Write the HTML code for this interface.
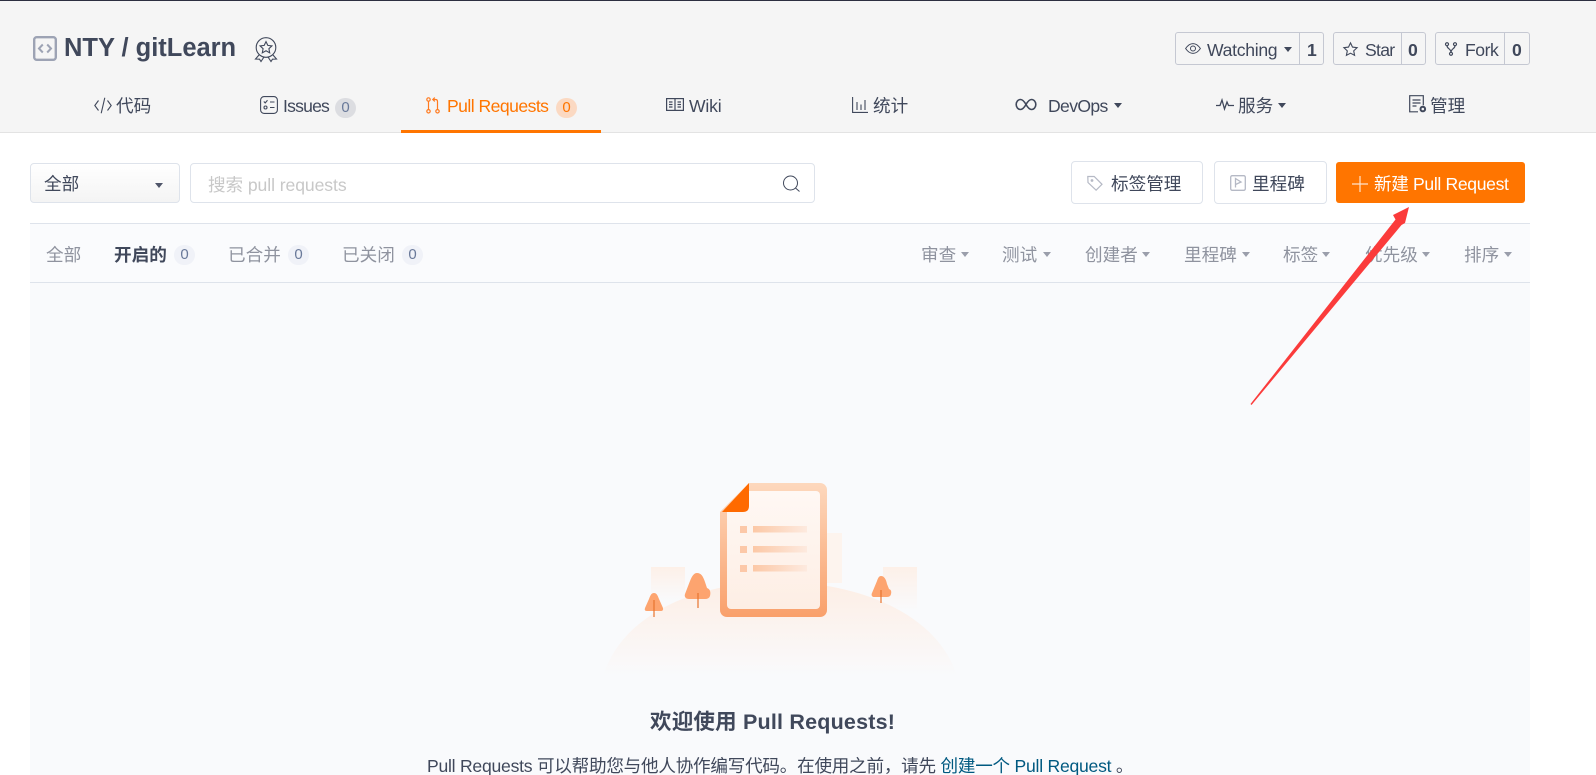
<!DOCTYPE html>
<html lang="zh">
<head>
<meta charset="utf-8">
<title>NTY / gitLearn - Pull Requests</title>
<style>
html,body{margin:0;padding:0;width:1596px;height:775px;overflow:hidden;background:#fff}
body{position:relative;font-family:"Liberation Sans","Noto Sans CJK SC",sans-serif;color:#40485b}
.box{position:absolute;box-sizing:border-box}
.t{position:absolute;white-space:nowrap;line-height:24px;font-size:17.6px;color:#40485b}
.n{letter-spacing:-.45px}
svg{position:absolute;overflow:visible}
.c{position:absolute;width:0;height:0;border-left:4.5px solid transparent;border-right:4.5px solid transparent;border-top:5px solid #40485b}
.g{border-color:#9a9eab;border-top-color:#9a9eab;border-left-color:transparent;border-right-color:transparent}
.bd{position:absolute;border-radius:11px;text-align:center;font-size:15px;line-height:20px;height:20px;width:21px;background:#f0f2f8;color:#6a7a9a}
.f{color:#8f939f}
</style>
</head>
<body>
<!-- header -->
<div class="box" style="left:0;top:0;width:1596px;height:133px;background:#f5f5f5;border-bottom:1px solid #e3e3e3"></div>
<div class="box" style="left:0;top:0;width:1596px;height:1px;background:#2d2f40"></div>

<svg style="left:33px;top:36px" width="24" height="25" viewBox="0 0 24 25" fill="none" stroke="#9da3b4"><rect x="1.2" y="1.2" width="21.6" height="22.6" rx="2.5" stroke-width="2.4"/><path d="M9.8 8.5L6 12.5l3.8 4M14.2 8.5L18 12.5l-3.8 4" stroke-width="2"/></svg>
<span class="t" style="left:64px;top:36px;font-size:25.5px;font-weight:700;line-height:24px;letter-spacing:-.02px">NTY / gitLearn</span>
<svg style="left:254px;top:37px" width="24" height="25" viewBox="0 0 24 25" fill="none" stroke="#40485b" stroke-width="1.1"><circle cx="12" cy="10.5" r="9.8"/><path d="M12 4.6l1.8 3.8 4.1.5-3 2.8.8 4.1-3.7-2-3.7 2 .8-4.1-3-2.8 4.1-.5z"/><path d="M5 18l-3.500 4 4 .2 1.500 2.300 3-4.500M19 18l3.500 4-4 .2-1.500 2.300-3-4.500"/></svg>

<!-- repo actions -->
<div class="box" style="left:1175px;top:32px;width:149px;height:33px;border:1px solid #c5c8d2;border-radius:3px"></div>
<div class="box" style="left:1299px;top:32px;width:1px;height:33px;background:#c5c8d2"></div>
<svg style="left:1185px;top:43px" width="16" height="11" viewBox="0 0 16 11" fill="none" stroke="#40485b" stroke-width="1"><path d="M.6 5.500C3 2 5.500.6 8 .6s5 1.400 7.400 4.900C13 9 10.500 10.400 8 10.400S3 9 .6 5.500z"/><circle cx="8" cy="5.500" r="2.500"/></svg>
<span class="t n" style="left:1207px;top:38px;letter-spacing:-.3px">Watching</span>
<div class="c" style="left:1284px;top:47px"></div>
<span class="t" style="left:1307px;top:38px;font-weight:700">1</span>

<div class="box" style="left:1333px;top:32px;width:93px;height:33px;border:1px solid #c5c8d2;border-radius:3px"></div>
<div class="box" style="left:1401px;top:32px;width:1px;height:33px;background:#c5c8d2"></div>
<svg style="left:1343px;top:42px" width="15" height="14" viewBox="0 0 15 14" fill="none" stroke="#40485b" stroke-width="1.100"><path d="M7.500.9l2 4.200 4.600.6-3.400 3.200.9 4.500-4.100-2.200-4.100 2.200.9-4.500L.9 5.700l4.600-.6z"/></svg>
<span class="t n" style="left:1365px;top:38px;letter-spacing:-.7px">Star</span>
<span class="t" style="left:1408px;top:38px;font-weight:700">0</span>

<div class="box" style="left:1435px;top:32px;width:95px;height:33px;border:1px solid #c5c8d2;border-radius:3px"></div>
<div class="box" style="left:1504px;top:32px;width:1px;height:33px;background:#c5c8d2"></div>
<svg style="left:1445px;top:42px" width="12" height="14" viewBox="0 0 12 14" fill="none" stroke="#40485b" stroke-width="1.200"><circle cx="2" cy="2.200" r="1.500"/><circle cx="10" cy="2.200" r="1.500"/><circle cx="6" cy="11.800" r="1.500"/><path d="M2 3.700c0 3 4 3 4 6.600M10 3.700c0 3-4 3-4 6.600"/></svg>
<span class="t n" style="left:1465px;top:38px">Fork</span>
<span class="t" style="left:1512px;top:38px;font-weight:700">0</span>

<!-- nav -->
<svg style="left:94px;top:97px" width="18" height="17" viewBox="0 0 18 17" fill="none" stroke="#40485b" stroke-width="1.100"><path d="M4.500 3.500L.8 8.500l3.700 5M13.500 3.500l3.700 5-3.700 5M10.800.8L7.200 16.200"/></svg>
<span class="t" style="left:116px;top:94px">代码</span>

<svg style="left:260px;top:96px" width="18" height="18" viewBox="0 0 18 18" fill="none" stroke="#40485b" stroke-width="1.100"><rect x=".6" y=".6" width="16.800" height="16.800" rx="3.500"/><path d="M3.800 5.500l1.400 1.400 2.300-2.600M10 6h4.500M10 11.500h4.500"/><circle cx="5.500" cy="11.500" r="1.500"/></svg>
<span class="t n" style="left:283px;top:94px;letter-spacing:-.8px">Issues</span>
<div class="bd" style="left:335px;top:98px;background:#dcdde1;color:#6a7a9a">0</div>

<svg style="left:426px;top:97px" width="14" height="17" viewBox="0 0 14 17" fill="none" stroke="#ff7a1f" stroke-width="1.200"><circle cx="2.500" cy="2.500" r="1.700"/><circle cx="2.500" cy="14.300" r="1.700"/><circle cx="11.500" cy="14.300" r="1.700"/><path d="M2.500 4.200v8.400M11.500 12.600V4.500c0-1.200-.8-2-2-2H7M8.800.6L6.800 2.500l2 1.900"/></svg>
<span class="t n" style="left:447px;top:94px;color:#ff7500;letter-spacing:-.55px">Pull Requests</span>
<div class="bd" style="left:556px;top:98px;background:#fbd9c2;color:#ff7500">0</div>
<div class="box" style="left:401px;top:130px;width:200px;height:3px;background:#ff7500"></div>

<svg style="left:666px;top:98px" width="18" height="13" viewBox="0 0 18 13" fill="none" stroke="#40485b" stroke-width="1.200"><rect x=".6" y=".6" width="16.800" height="11.800"/><path d="M9 .6v11.800M3 4h3.500M3 6.500h3.500M3 9h3.500M11.500 4H15M11.500 6.500H15M11.500 9H15"/></svg>
<span class="t n" style="left:689px;top:94px;letter-spacing:-.2px">Wiki</span>

<svg style="left:852px;top:97px" width="16" height="16" viewBox="0 0 16 16" fill="none" stroke="#40485b" stroke-width="1.100"><path d="M.6 0v15.400H16M5 5v8M9 7.500V13M13 3v10"/></svg>
<span class="t" style="left:873px;top:94px">统计</span>

<svg style="left:1015px;top:98px" width="22" height="13" viewBox="0 0 22 13" fill="none" stroke="#40485b" stroke-width="1.600"><path d="M11 6.500C9 3 7.500 1.500 5.500 1.500 3 1.500 1.200 3.800 1.200 6.500s1.800 5 4.300 5c2 0 3.500-1.500 5.500-5zm0 0c2-3.500 3.500-5 5.500-5 2.500 0 4.300 2.300 4.300 5s-1.800 5-4.300 5c-2 0-3.500-1.500-5.500-5z"/></svg>
<span class="t n" style="left:1048px;top:94px;letter-spacing:-.65px">DevOps</span>
<div class="c" style="left:1114px;top:103px"></div>

<svg style="left:1216px;top:98px" width="18" height="13" viewBox="0 0 18 13" fill="none" stroke="#40485b" stroke-width="1.300"><path d="M0 7.500h4l2-5.500 2.500 9L11 4l1.500 3.500H18"/></svg>
<span class="t" style="left:1238px;top:94px">服务</span>
<div class="c" style="left:1278px;top:103px"></div>

<svg style="left:1409px;top:95px" width="18" height="18" viewBox="0 0 18 18" fill="none" stroke="#40485b" stroke-width="1.200"><path d="M9 16.800H.7V.7h13.600v9.500M3.500 5h8M3.500 8h8M3.500 11h4"/><circle cx="13.800" cy="14" r="2.300" stroke-width="2"/></svg>
<span class="t" style="left:1430px;top:94px">管理</span>

<!-- toolbar -->
<div class="box" style="left:30px;top:163px;width:150px;height:40px;border:1px solid #dee3eb;border-radius:4px;background:linear-gradient(#fff,#f4f4f4)"></div>
<span class="t" style="left:44px;top:172px">全部</span>
<div class="c" style="left:155px;top:183px;border-top-color:#50566a"></div>

<div class="box" style="left:190px;top:163px;width:625px;height:40px;border:1px solid #dee3eb;border-radius:4px;background:#fff"></div>
<span class="t n" style="left:208px;top:173px;color:#c8c8c8;letter-spacing:-.08px">搜索 pull requests</span>
<svg style="left:782px;top:175px" width="19" height="17" viewBox="0 0 19 17" fill="none" stroke="#40485b" stroke-width="1"><circle cx="8.500" cy="8" r="7"/><path d="M13.500 13l4 3.500"/></svg>

<div class="box" style="left:1071px;top:161px;width:132px;height:43px;border:1px solid #dee3eb;border-radius:4px"></div>
<svg style="left:1087px;top:175px" width="16" height="16" viewBox="0 0 16 16" fill="none" stroke="#b5b9c5" stroke-width="1.200"><path d="M.8 1.500h6.400l7.800 7.800-5.900 5.900L1 7.500z"/><circle cx="5" cy="5.500" r=".8" fill="#b5b9c5"/></svg>
<span class="t" style="left:1111px;top:172px">标签管理</span>

<div class="box" style="left:1214px;top:161px;width:113px;height:43px;border:1px solid #dee3eb;border-radius:4px"></div>
<svg style="left:1230px;top:175px" width="16" height="16" viewBox="0 0 16 16" fill="none" stroke="#b5b9c5" stroke-width="1.300"><rect x=".7" y=".7" width="14.600" height="14.600" rx="1.500"/><path d="M5.500 12.500V3.500l5.500 3.500-5.500 2.500"/></svg>
<span class="t" style="left:1252px;top:172px">里程碑</span>

<div class="box" style="left:1336px;top:162px;width:189px;height:41px;background:#ff7500;border-radius:3px"></div>
<svg style="left:1352px;top:176px" width="16" height="16" viewBox="0 0 16 16" fill="none" stroke="#ffe3cc" stroke-width="1.200"><path d="M8 0v16M0 8h16"/></svg>
<span class="t n" style="left:1374px;top:172px;color:#fff;letter-spacing:-.35px">新建 Pull Request</span>

<!-- filter bar -->
<div class="box" style="left:30px;top:223px;width:1500px;height:552px;background:#f9fafc;border-top:1px solid #dee3eb"></div>
<div class="box" style="left:30px;top:224px;width:1500px;height:59px;background:#fafbfd;border-bottom:1px solid #dee3eb"></div>

<span class="t f" style="left:46px;top:243px">全部</span>
<span class="t" style="left:114px;top:243px;font-weight:700">开启的</span>
<div class="bd" style="left:174px;top:245px">0</div>
<span class="t f" style="left:228px;top:243px">已合并</span>
<div class="bd" style="left:288px;top:245px">0</div>
<span class="t f" style="left:342px;top:243px">已关闭</span>
<div class="bd" style="left:402px;top:245px">0</div>

<span class="t f" style="left:921px;top:243px">审查</span><div class="c g" style="left:961px;top:252px"></div>
<span class="t f" style="left:1002px;top:243px">测试</span><div class="c g" style="left:1043px;top:252px"></div>
<span class="t f" style="left:1085px;top:243px">创建者</span><div class="c g" style="left:1142px;top:252px"></div>
<span class="t f" style="left:1184px;top:243px">里程碑</span><div class="c g" style="left:1242px;top:252px"></div>
<span class="t f" style="left:1283px;top:243px">标签</span><div class="c g" style="left:1322px;top:252px"></div>
<span class="t f" style="left:1365px;top:243px">优先级</span><div class="c g" style="left:1422px;top:252px"></div>
<span class="t f" style="left:1464px;top:243px">排序</span><div class="c g" style="left:1504px;top:252px"></div>

<!-- illustration -->
<svg style="left:600px;top:470px" width="360" height="210" viewBox="600 470 360 210">
<defs>
<linearGradient id="hill" x1="0" y1="0" x2="0" y2="1"><stop offset="0" stop-color="#fdeee5"/><stop offset="1" stop-color="#f9fafc"/></linearGradient>
<linearGradient id="sq" x1="0" y1="0" x2="0" y2="1"><stop offset="0" stop-color="#fdf0e8"/><stop offset="1" stop-color="#fdf0e8" stop-opacity="0"/></linearGradient>
<linearGradient id="doc" x1="0" y1="0" x2="0" y2="1"><stop offset="0" stop-color="#fdd8bd"/><stop offset="1" stop-color="#f9a06b"/></linearGradient>
<linearGradient id="in" x1="0" y1="0" x2="0" y2="1"><stop offset="0" stop-color="#fff8f4"/><stop offset="1" stop-color="#fdeee4"/></linearGradient>
<linearGradient id="bar"><stop offset="0" stop-color="#fcc8a6"/><stop offset="1" stop-color="#fdeadf"/></linearGradient>
</defs>
<rect x="651" y="567" width="34" height="34" fill="url(#sq)"/>
<rect x="883" y="567" width="34" height="44" fill="url(#sq)"/>
<rect x="822" y="533" width="20" height="50" fill="#fdf4ee"/>
<path d="M603 676C622 615 695 582 778 582S938 615 957 676z" fill="url(#hill)"/>
<path d="M749 483H820a7 7 0 0 1 7 7V610a7 7 0 0 1-7 7H727a7 7 0 0 1-7-7V512z" fill="url(#doc)"/>
<path d="M749 491H816a4 4 0 0 1 4 4V605a4 4 0 0 1-4 4H731a4 4 0 0 1-4-4V512z" fill="url(#in)"/>
<path d="M749 483L722 512H743q6 0 6-6z" fill="#ff6a00"/>
<g fill="#fcc8a8"><rect x="740" y="526" width="7" height="7"/><rect x="740" y="546" width="7" height="7"/><rect x="740" y="565" width="7" height="7"/></g>
<g fill="url(#bar)"><rect x="753" y="526" width="54" height="6.500"/><rect x="753" y="546" width="54" height="6.500"/><rect x="753" y="565" width="54" height="6.500"/></g>
<g fill="#fda46f">
<path d="M654 593c2.500 0 3.500 2 5 6l4 9q.5 3-2 3h-14q-3 0-2-3l4-9c1.500-4 2.500-6 5-6z"/>
<path d="M697 573c4 0 6 3 8 9l2 6c3 1 4 4 3 8q-1 3-5 3h-16c-3 0-5-2-4-5l5-13c2-5 4-8 7-8z"/>
<path d="M881 576c3 0 5 3 6 8l2 5q3 1 2 5-.5 3-4 3h-13c-2 0-3-2-2-4l5-12c1-3 2-5 4-5z"/>
</g>
<g stroke="#e8742f" stroke-width="1.200"><path d="M654 600v17M698 593v15M881 590v13"/></g>
</svg>

<span class="t" style="left:650px;top:710px;font-size:21.5px;font-weight:700;letter-spacing:.2px">欢迎使用 Pull Requests!</span>
<span class="t n" style="left:427px;top:754px;font-size:17.6px;letter-spacing:-.25px">Pull Requests 可以帮助您与他人协作编写代码。在使用之前，请先 <span style="color:#005980">创建一个 Pull Request</span> 。</span>

<!-- red arrow -->
<svg style="left:0;top:0" width="1596" height="775" viewBox="0 0 1596 775"><path d="M1250.500 404L1395.500 219.500 1393 215 1409 207 1405 223 1401.500 225 1251.500 405z" fill="#fb3b3b"/></svg>
</body>
</html>
